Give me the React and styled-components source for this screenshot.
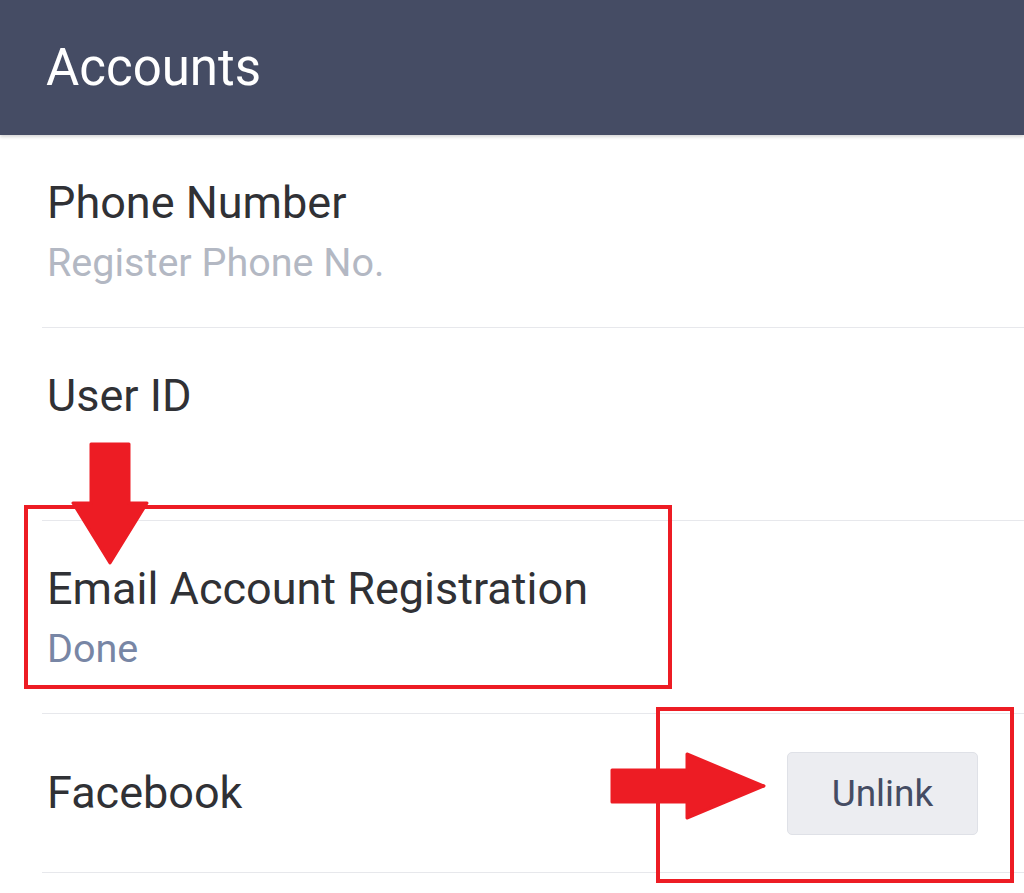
import React from "react";
import styled, { createGlobalStyle } from "styled-components";

const GlobalStyle = createGlobalStyle`
  html, body { margin: 0; padding: 0; background: #ffffff; }
  body { font-family: Roboto, "Noto Sans", "Liberation Sans", sans-serif; }
  * { box-sizing: border-box; }
`;

const Page = styled.div`
  position: relative;
  width: 1024px;
  height: 893px;
  overflow: hidden;
  background: #ffffff;
`;

const Header = styled.header`
  height: 135px;
  display: flex;
  align-items: center;
  padding-left: 46px;
  background: #454c64;
  box-shadow: 0 2px 3px rgba(0, 0, 0, 0.16);
  position: relative;
  z-index: 1;
`;

const HeaderTitle = styled.h1`
  margin: 0;
  font-size: 51px;
  font-weight: 400;
  color: #ffffff;
  line-height: 60px;
`;

const List = styled.div`
  display: flex;
  flex-direction: column;
`;

const Item = styled.div`
  display: flex;
  align-items: center;
  justify-content: space-between;
  padding: ${(p) => (p.$compact ? "0 46px 0 47px" : "38px 46px 34px 47px")};
  height: ${(p) => (p.$compact ? "158px" : "auto")};
`;

const Texts = styled.div`
  display: flex;
  flex-direction: column;
`;

const ItemTitle = styled.div`
  font-size: 45px;
  line-height: 60px;
  color: #303135;
`;

const ItemSub = styled.div`
  font-size: 39.5px;
  line-height: 60px;
  min-height: 60px;
  color: ${(p) => (p.$tone === "accent" ? "#7886a5" : "#b3b8c3")};
`;

const Divider = styled.div`
  height: 1px;
  margin-left: 42px;
  background: #e7e8ec;
`;

const UnlinkButton = styled.button`
  width: 191px;
  height: 83px;
  border: 1px solid #dfe1e7;
  border-radius: 5px;
  background: #ecedf1;
  color: #454c63;
  font-family: Roboto, "Noto Sans", sans-serif;
  font-size: 37px;
  padding: 0;
`;

const Overlay = styled.svg`
  position: absolute;
  left: 0;
  top: 0;
  width: 1024px;
  height: 893px;
  pointer-events: none;
  z-index: 2;
`;

const RED = "#ed1c24";

function Annotations() {
  return (
    <Overlay viewBox="0 0 1024 893">
      <rect x="26" y="507" width="644" height="180" fill="none" stroke={RED} strokeWidth="4" />
      <rect x="658" y="709" width="354" height="172" fill="none" stroke={RED} strokeWidth="4" />
      <polygon
        points="91,444 129,444 129,503 147,503 110,563 73,503 91,503"
        fill={RED}
        stroke={RED}
        strokeWidth="3"
        strokeLinejoin="round"
      />
      <polygon
        points="612,770 687,770 687,754 764,786 687,818 687,802 612,802"
        fill={RED}
        stroke={RED}
        strokeWidth="3"
        strokeLinejoin="round"
      />
    </Overlay>
  );
}

export default function App() {
  return (
    <>
      <GlobalStyle />
      <Page>
        <Header>
          <HeaderTitle>Accounts</HeaderTitle>
        </Header>
        <List>
          <Item>
            <Texts>
              <ItemTitle>Phone Number</ItemTitle>
              <ItemSub>Register Phone No.</ItemSub>
            </Texts>
          </Item>
          <Divider />
          <Item>
            <Texts>
              <ItemTitle>User ID</ItemTitle>
              <ItemSub />
            </Texts>
          </Item>
          <Divider />
          <Item>
            <Texts>
              <ItemTitle>Email Account Registration</ItemTitle>
              <ItemSub $tone="accent">Done</ItemSub>
            </Texts>
          </Item>
          <Divider />
          <Item $compact>
            <ItemTitle>Facebook</ItemTitle>
            <UnlinkButton>Unlink</UnlinkButton>
          </Item>
          <Divider />
        </List>
        <Annotations />
      </Page>
    </>
  );
}
